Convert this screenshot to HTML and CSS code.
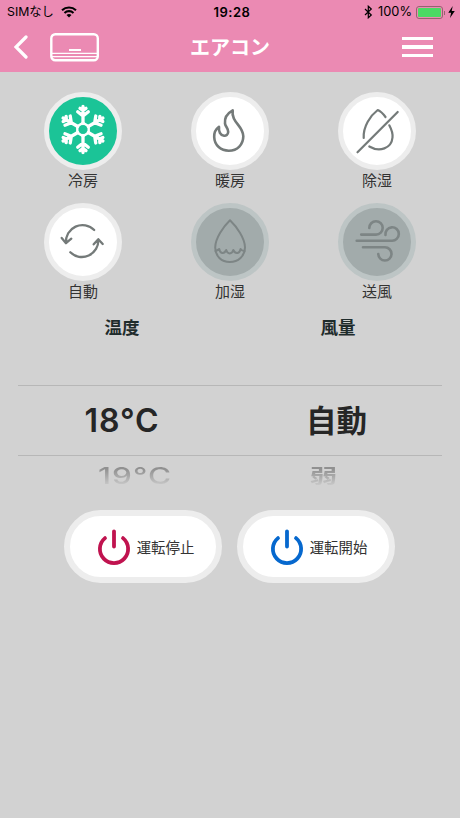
FILE: index.html
```html
<!DOCTYPE html>
<html lang="ja">

<head>
    <meta charset="UTF-8">
    <meta name="viewport" content="width=device-width, initial-scale=1.0">
    <title>エアコン</title>
    <link rel="stylesheet" href="styles.css">
</head>

<body>
    <header class="header">
        <div class="status-bar">
            <div class="carrier">
                <span>SIMなし</span>
                <svg class="wifi" width="16" height="12" viewBox="0 0 16 12">
                    <path d="M1 4.2a10.3 10.3 0 0 1 14 0M3.5 6.9a6.6 6.6 0 0 1 9 0" fill="none" stroke="#000" stroke-width="2.1" />
                    <path d="M5.5 9a3.8 3.8 0 0 1 5 0L8 11.6z" />
                </svg>
            </div>
            <div class="time">19:28</div>
            <div class="power-status">
                <svg width="9" height="14" viewBox="0 0 9 14">
                    <path d="M1 4l6.3 6-3 2.8V1.2l3 2.8L1 10" fill="none" stroke="#000" stroke-width="1.2" />
                </svg>
                <span>100%</span>
                <div class="battery"><div class="battery-level"></div></div>
                <svg class="bolt" width="7" height="12" viewBox="0 0 7 12">
                    <path d="M4.7 0L.3 6.8h2.8L2 12l4.8-7H3.7z" />
                </svg>
            </div>
        </div>
        <div class="nav-bar">
            <div class="nav-left">
                <svg width="14" height="24" viewBox="0 0 14 24">
                    <path d="M12 2L2 12l10 10" fill="none" stroke="#fff" stroke-width="3.2" stroke-linecap="round" />
                </svg>
                <svg width="50" height="29" viewBox="0 0 50 29" fill="none" stroke="#fff">
                    <rect x="1.3" y="1.3" width="46.5" height="26" rx="4" stroke-width="2.4" />
                    <path d="M2 20.3h45M2 23.7h45" stroke-width="1.3" />
                    <path d="M19 17h12" stroke-width="2" />
                </svg>
            </div>
            <h1>エアコン</h1>
            <div class="menu">
                <span></span>
                <span></span>
                <span></span>
            </div>
        </div>
    </header>

    <main>
        <!-- 運転モード -->
        <div class="modes">
            <div class="mode active">
                <div class="circle">
                    <svg class="icon" viewBox="-33 -33 66 66">
                        <defs>
                            <g id="arm">
                                <path d="M0-6V-23M0-13.5l-5.3-4.3M0-13.5l5.3-4.3M0-19.2l-3-2M0-19.2l3-2" />
                            </g>
                        </defs>
                        <g transform="translate(0 -1.5)" stroke="#fff" stroke-width="3.3">
                            <path d="M0-6.6L5.7-3.3V3.3L0 6.6L-5.7 3.3V-3.3z" stroke-width="2.4" />
                            <use href="#arm" />
                            <use href="#arm" transform="rotate(60)" />
                            <use href="#arm" transform="rotate(120)" />
                            <use href="#arm" transform="rotate(180)" />
                            <use href="#arm" transform="rotate(240)" />
                            <use href="#arm" transform="rotate(300)" />
                        </g>
                    </svg>
                </div>
                <p>冷房</p>
            </div>
            <div class="mode">
                <div class="circle">
                    <svg class="icon" viewBox="-33 -33 66 66" stroke-width="2.6">
                        <path d="M2.7-20.7C-3-17.5-5.6-12.5-5-7.5C-4.6-4.2-1.5-2.5-1.8 1C-2 3.7-4 5-6 4.7C-9.8 4.3-11.5.5-11-4.2C-14-2-16 1.5-15.8 6C-15.5 14.5-9 19.7-1.2 19.7C7.5 19.7 13.3 13.5 13.3 5.3C13.3-5.5 1-8.5 2.7-20.7z" />
                    </svg>
                </div>
                <p>暖房</p>
            </div>
            <div class="mode">
                <div class="circle">
                    <svg class="icon" viewBox="-33 -33 66 66" stroke-width="2.2">
                        <path d="M8.5-14C6-17.5 3.3-20 .7-21C-6.5-15.5-14-4.5-13.3 7" />
                        <path d="M12.3-5.7C14.8-1 15.9 3 15.5 6.5C14.5 17.5 2.5 21.5-7.7 15.5" />
                        <path d="M-19.5 21.3L20.7-19" />
                    </svg>
                </div>
                <p>除湿</p>
            </div>
            <div class="mode">
                <div class="circle">
                    <svg class="icon" viewBox="-33 -33 66 66" stroke-width="2.3">
                        <path d="M11.2-12A16.5 16.5 0 0 0-17 1M-21.3-4L-17 1.2L-11.7-3.3" />
                        <path d="M-12.7 10.3A16.5 16.5 0 0 0 15.3-2.6M10.7 2.3L15.3-2.8L19.7 2" />
                    </svg>
                </div>
                <p>自動</p>
            </div>
            <div class="mode disabled">
                <div class="circle">
                    <svg class="icon" viewBox="-33 -33 66 66" stroke-width="2">
                        <path d="M0-21.8C-6.5-15.5-14.8-4-14.8 5.5C-14.8 14-8.5 20-.2 20S15 14 15 5.5C15-4 6.5-15.5 0-21.8z" />
                        <path d="M-14.5 9C-13 8.5-11.5 7.8-10.8 7C-10 11.5-6 12.7-3.8 8C-2.5 12.5 2 12.5 3.3 8C5.5 12.7 9.8 11.5 10.6 7C11.5 8.3 13 9 14.5 9" />
                    </svg>
                </div>
                <p>加湿</p>
            </div>
            <div class="mode disabled">
                <div class="circle">
                    <svg class="icon" viewBox="-33 -33 66 66" stroke-width="2.6">
                        <path d="M-15.8-7.4H-1A6.7 6.7 0 1 0-7.7-14" />
                        <path d="M-20.3-1.3H14.7A6.7 6.7 0 1 0 8.5-7" />
                        <path d="M-14 5.3H8A6.6 6.6 0 1 1 1.3 12" />
                    </svg>
                </div>
                <p>送風</p>
            </div>
        </div>

        <!-- 温度・風量 -->
        <div class="picker-titles">
            <h2>温度</h2>
            <h2>風量</h2>
        </div>
        <div class="picker">
            <div class="picker-row selected">
                <span class="temp">18°C</span>
                <span class="fan">自動</span>
            </div>
            <div class="picker-row next">
                <span class="next-temp">19°C</span>
                <span class="next-fan">弱</span>
            </div>
        </div>

        <!-- 運転ボタン -->
        <div class="buttons">
            <button class="btn stop">
                <svg width="34" height="38" viewBox="-17 -19 34 38">
                    <path d="M-9-8.9A14.1 14.1 0 1 0 9-8.9M0-15.7V-.5" />
                </svg>
                <span>運転停止</span>
            </button>
            <button class="btn start">
                <svg width="34" height="38" viewBox="-17 -19 34 38">
                    <path d="M-9-8.9A14.1 14.1 0 1 0 9-8.9M0-15.7V-.5" />
                </svg>
                <span>運転開始</span>
            </button>
        </div>
    </main>
</body>

</html>
```
FILE: styles.css
```css
* {
    box-sizing: border-box;
    margin: 0;
    padding: 0;
}

body {
    font-family: Inter, "Noto Sans CJK JP", sans-serif;
    background-color: #d2d2d2;
    color: #333;
    min-height: 100vh;
}

svg {
    display: block;
    flex-shrink: 0;
}

.header {
    height: 72px;
    background-color: #eb8ab3;
}

.status-bar {
    display: grid;
    grid-template-columns: 1fr auto 1fr;
    align-items: center;
    height: 24px;
    padding: 0 5px 0 7px;
    font-size: 12.8px;
    line-height: 24px;
    color: #000;
}

.carrier {
    display: flex;
    align-items: center;
    gap: 7px;
    font-size: 12.3px;
}

.time {
    margin-left: 2px;
    font-size: 13px;
    font-weight: 600;
    letter-spacing: 0.5px;
}

.power-status {
    display: flex;
    align-items: center;
    justify-content: flex-end;
}

.power-status span {
    margin: 0 4px 0 5px;
}

.battery {
    position: relative;
    width: 27px;
    height: 13px;
    padding: 1px;
    border: 1px solid #95636f;
    border-radius: 3px;
}

.battery::after {
    content: "";
    position: absolute;
    right: -3px;
    top: 4px;
    width: 1px;
    height: 4px;
    background-color: #95636f;
}

.battery-level {
    height: 100%;
    border-radius: 1px;
    background-color: #4cd964;
}

.bolt {
    margin-left: 5px;
}

.nav-bar {
    display: grid;
    grid-template-columns: 1fr auto 1fr;
    align-items: center;
    height: 46px;
    padding: 0 27px 0 14px;
}

.nav-left {
    display: flex;
    align-items: center;
    gap: 22px;
}

.nav-bar h1 {
    margin-right: -13px;
    padding-top: 2px;
    font-size: 20px;
    font-weight: 700;
    line-height: 30px;
    color: #fff;
}

.menu {
    justify-self: end;
    display: flex;
    flex-direction: column;
    gap: 5px;
    width: 31px;
}

.menu span {
    height: 3.5px;
    background-color: #fff;
}

.modes {
    display: grid;
    grid-template-columns: repeat(3, 147px);
    justify-content: center;
    padding-top: 20px;
}

.mode {
    display: flex;
    flex-direction: column;
    align-items: center;
    height: 111px;
}

.circle {
    display: flex;
    align-items: center;
    justify-content: center;
    width: 78px;
    height: 78px;
    border: 5.5px solid #ededed;
    border-radius: 50%;
    background-color: #fff;
}

.icon {
    width: 66px;
    height: 66px;
    fill: none;
    stroke: #747a79;
    stroke-linecap: round;
    stroke-linejoin: round;
}

.active .circle {
    background-color: #1bc497;
}

.disabled .circle {
    border-color: #bdc5c5;
    background-color: #a2abab;
}

.disabled .icon {
    stroke: #7d8585;
}

.mode p {
    font-size: 15px;
    line-height: 22px;
}

.picker-titles {
    display: grid;
    grid-template-columns: 216px 216px;
    justify-content: center;
    text-align: center;
    padding-top: 2px;
}

.picker-titles h2 {
    font-size: 17.5px;
    line-height: 24px;
    font-weight: 700;
    color: #1f2c2c;
}

.picker {
    margin: 45px 18px 0;
}

.picker-row {
    display: grid;
    grid-template-columns: 208px 1fr;
    text-align: center;
}

.selected {
    height: 71px;
    border-top: 1px solid #b7b7b7;
    border-bottom: 1px solid #b7b7b7;
    font-size: 32px;
    font-weight: 600;
    line-height: 69px;
    color: #262626;
}

.temp {
    letter-spacing: 0.9px;
}

.fan {
    padding-left: 5px;
    font-size: 30.5px;
}

.next {
    height: 54px;
}

/* ホイールの奥に回り込む行 */
.next span {
    height: 40px;
    line-height: 40px;
    color: transparent;
    background: linear-gradient(#909090 25%, #cccccc 85%);
    background-clip: text;
    -webkit-background-clip: text;
    transform: scaleY(0.72);
}

.next-temp {
    padding-left: 26px;
    font-size: 31.5px;
    font-weight: 500;
    letter-spacing: 1px;
}

.next-fan {
    padding-right: 21px;
    font-size: 27.5px;
    font-weight: 700;
}

.buttons {
    display: flex;
    justify-content: center;
    gap: 15px;
    padding-right: 1px;
}

.btn {
    display: flex;
    align-items: center;
    justify-content: center;
    gap: 6px;
    width: 158px;
    height: 73px;
    padding-left: 5px;
    border: 6px solid #ededed;
    border-radius: 37px;
    background-color: #fff;
    font-family: inherit;
    font-size: 14.4px;
    color: #333;
}

.btn path {
    fill: none;
    stroke-width: 3.8;
    stroke-linecap: round;
}

.stop path {
    stroke: #c0134f;
}

.start path {
    stroke: #0668ce;
}
```
